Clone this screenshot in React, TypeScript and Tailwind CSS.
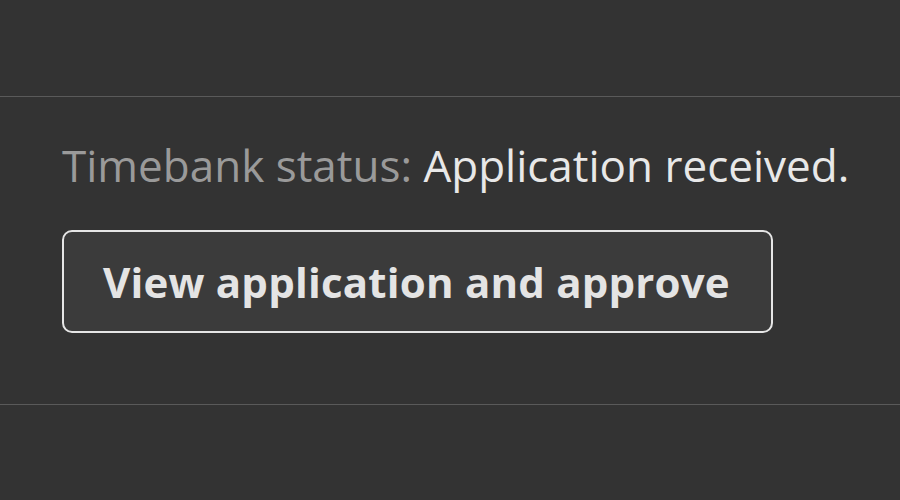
export default function App() {
  return (
    <div className="w-[900px] h-[500px] bg-[#333333] overflow-hidden flex flex-col" style={{ fontFamily: '"Open Sans", "Noto Sans", sans-serif' }}>
      <div className="h-[96px] shrink-0" />
      <div className="border-t border-[#5a5a5a] pl-[62px] pt-[38px] h-[308px] shrink-0 flex flex-col items-start">
        <p className="text-[44px] leading-[60px] text-[#e8e8e8] whitespace-nowrap">
          <span className="text-[#9a9a9a]">Timebank status:</span> Application received.
        </p>
        <button className="mt-[35px] w-[711px] h-[103px] rounded-[10px] border-2 border-[#e6e6e6] bg-[#3b3b3b] text-[42px] font-bold text-[#e4e4e4] pl-[39px] text-left whitespace-nowrap tracking-[0.2px]">
          View application and approve
        </button>
      </div>
      <div className="border-t border-[#5a5a5a]" />
    </div>
  );
}
